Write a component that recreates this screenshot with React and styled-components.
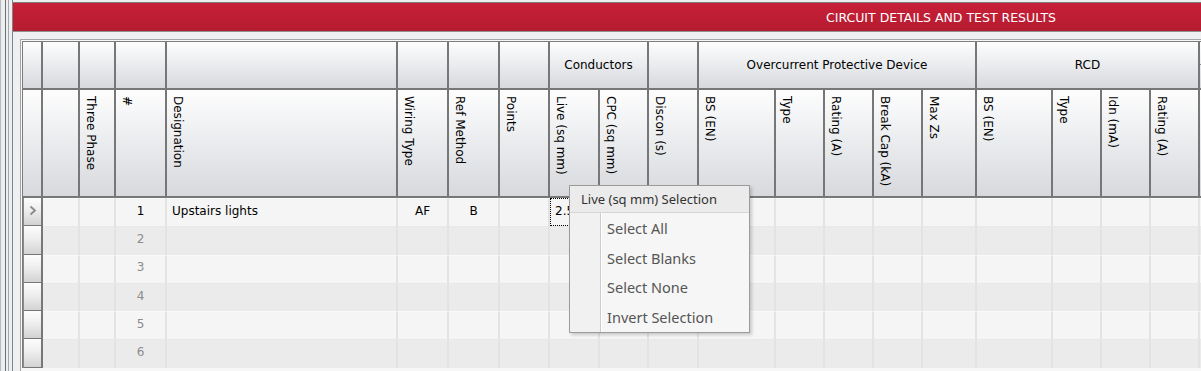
import styled, { createGlobalStyle } from 'styled-components'

const GlobalStyle = createGlobalStyle`
  html, body { margin: 0; padding: 0; }
  body {
    width: 1201px;
    height: 371px;
    overflow: hidden;
    background: #eceef0;
    font-family: "DejaVu Sans", Verdana, sans-serif;
  }
`

const Page = styled.div`
  display: flex;
  height: 371px;
`

const Gutter = styled.div`
  flex: 0 0 12px;
  background: linear-gradient(
    to right,
    #b8b9bb 0 1px,
    #eceef0 1px 5px,
    #6b6f74 5px 6px,
    #eceef0 6px 8px,
    #a3a7ab 8px 9px,
    #eceef0 9px
  );
`

const Panel = styled.div`
  flex: 1;
  min-width: 0;
  display: flex;
  flex-direction: column;
  padding-top: 2px;
  border-left: 1px solid #808387;
`

const TitleBar = styled.div`
  height: 28px;
  display: flex;
  align-items: center;
  padding-left: 813px;
  border-top: 1px solid #7d7d7d;
  border-bottom: 1px solid #8e9094;
  background: linear-gradient(#c71f37, #b51c30);
  color: #ffffff;
  font-size: 12.5px;
  white-space: nowrap;
`

const Content = styled.div`
  flex: 1;
  padding: 7px 0 0 7px;
  background: #eef0f2;
  overflow: hidden;
`

const GridFrame = styled.div`
  border-top: 1px solid #a4a6a8;
  border-left: 1px solid #a4a6a8;
  padding: 1px 0 0 1px;
  background: #f7f7f7;
  height: 100%;
`

const Grid = styled.div`
  position: relative;
  display: grid;
  grid-template-columns: ${(p) => p.$cols};
  grid-template-rows: 48px 108px repeat(6, 28.3px);
  border-top: 1px solid #7c7c7c;
  border-left: 1px solid #7c7c7c;
  font-size: 12px;
  color: #000;
`

const HeadCell = styled.div`
  box-sizing: border-box;
  display: flex;
  align-items: ${(p) => (p.$group ? 'center' : 'flex-start')};
  justify-content: ${(p) => (p.$group ? 'center' : 'flex-start')};
  padding: ${(p) => (p.$group ? '0' : '6px 0 0 3px')};
  grid-column: span ${(p) => p.$span || 1};
  border-right: 2px solid #777777;
  border-bottom: 2px solid #777777;
  background: linear-gradient(#fdfdfd, #f0f1f3 35%, #d7d9dd);
  white-space: nowrap;
  overflow: hidden;
  position: relative;
`

const SplitLine = styled.div`
  position: absolute;
  left: 0;
  right: 0;
  top: 22px;
  border-bottom: 1px solid #8a8a8a;
`

const VLabel = styled.span`
  writing-mode: vertical-rl;
  white-space: nowrap;
  line-height: 15px;
`

const RowHead = styled.div`
  box-sizing: border-box;
  display: flex;
  align-items: center;
  justify-content: center;
  padding-bottom: 3px;
  border-left: 1px solid #8a8a8a;
  border-right: 2px solid #777777;
  border-bottom: 1px solid #777777;
  background: linear-gradient(#fdfdfd, #eeeeee 45%, #d3d3d3);
`

const Cell = styled.div`
  box-sizing: border-box;
  display: flex;
  align-items: center;
  justify-content: ${(p) => (p.$center ? 'center' : 'flex-start')};
  padding: ${(p) => (p.$center ? '0 0 4px 0' : '0 0 4px 5px')};
  background: ${(p) => (p.$odd ? '#f5f5f5' : '#ebebeb')};
  border-right: 2px solid #e3e3e3;
  border-top: 1px solid ${(p) => (p.$odd ? '#fafafa' : '#e8e8e8')};
  color: ${(p) => (p.$muted ? '#8c8c8c' : '#000')};
  outline: ${(p) => (p.$focus ? '1px dotted #000' : 'none')};
  outline-offset: -1px;
  white-space: nowrap;
  overflow: hidden;
`

const Menu = styled.div`
  position: absolute;
  left: 546px;
  top: 143px;
  width: 181px;
  height: 148px;
  box-sizing: border-box;
  border: 1px solid #9c9c9c;
  background: #f6f6f6;
  box-shadow: 2px 2px 3px rgba(0, 0, 0, 0.18);
  font-family: "Noto Sans", "Open Sans", sans-serif;
  display: flex;
  flex-direction: column;
`

const MenuTitle = styled.div`
  height: 26px;
  flex: 0 0 26px;
  display: flex;
  align-items: center;
  padding-left: 11px;
  background: #ebebeb;
  border-bottom: 1px solid #d6d6d6;
  color: #333;
  font-size: 13px;
  white-space: nowrap;
`

const MenuList = styled.div`
  flex: 1;
  background: linear-gradient(
    to right,
    #f1f1f1 0 30px,
    #cdcdcd 30px 31px,
    #ffffff 31px 32px,
    #f6f6f6 32px
  );
`

const MenuItem = styled.div`
  height: 29.7px;
  display: flex;
  align-items: center;
  padding-left: 37px;
  color: #555;
  font-size: 14.5px;
  white-space: nowrap;
`

const columns = [
  { w: 20 },
  { w: 37 },
  { w: 36, label: 'Three Phase' },
  { w: 51, label: '#', key: 'num', center: true },
  { w: 231, label: 'Designation', key: 'designation' },
  { w: 51, label: 'Wiring Type', key: 'wiring', center: true },
  { w: 51, label: 'Ref Method', key: 'ref', center: true },
  { w: 50, label: 'Points' },
  { w: 50, label: 'Live (sq mm)', key: 'live' },
  { w: 49, label: 'CPC (sq mm)' },
  { w: 50, label: 'Discon (s)' },
  { w: 77, label: 'BS (EN)' },
  { w: 49, label: 'Type' },
  { w: 49, label: 'Rating (A)' },
  { w: 49, label: 'Break Cap (kA)' },
  { w: 54, label: 'Max Zs' },
  { w: 76, label: 'BS (EN)' },
  { w: 49, label: 'Type' },
  { w: 49, label: 'Idn (mA)' },
  { w: 49, label: 'Rating (A)' },
  { w: 60 },
]

const groups = [
  ...Array(8).fill({ span: 1 }),
  { span: 2, label: 'Conductors' },
  { span: 1 },
  { span: 5, label: 'Overcurrent Protective Device' },
  { span: 4, label: 'RCD' },
  { span: 1, split: true },
]

const rows = [
  { num: '1', designation: 'Upstairs lights', wiring: 'AF', ref: 'B', live: '2.5' },
  { num: '2' },
  { num: '3' },
  { num: '4' },
  { num: '5' },
  { num: '6' },
]

const menuItems = ['Select All', 'Select Blanks', 'Select None', 'Invert Selection']

function Chevron() {
  return (
    <svg width="8" height="11" viewBox="0 0 8 11">
      <polyline points="1.5,1.5 6,5.5 1.5,9.5" fill="none" stroke="#8a8a8a" strokeWidth="1.8" />
    </svg>
  )
}

export default function App() {
  const template = columns.map((c) => `${c.w}px`).join(' ')
  return (
    <>
      <GlobalStyle />
      <Page>
        <Gutter />
        <Panel>
          <TitleBar>CIRCUIT DETAILS AND TEST RESULTS</TitleBar>
          <Content>
            <GridFrame>
              <Grid $cols={template}>
                {groups.map((g, i) => (
                  <HeadCell key={`g${i}`} $group $span={g.span}>
                    {g.label}
                    {g.split && <SplitLine />}
                  </HeadCell>
                ))}
                {columns.map((c, i) => (
                  <HeadCell key={`h${i}`}>
                    {c.label && <VLabel>{c.label}</VLabel>}
                  </HeadCell>
                ))}
                {rows.map((r, ri) =>
                  columns.map((c, ci) => {
                    if (ci === 0) {
                      return <RowHead key={`r${ri}c${ci}`}>{ri === 0 && <Chevron />}</RowHead>
                    }
                    return (
                      <Cell
                        key={`r${ri}c${ci}`}
                        $odd={ri % 2 === 0}
                        $center={c.center}
                        $muted={c.key === 'num' && ri > 0}
                        $focus={ri === 0 && c.key === 'live'}
                      >
                        {c.key ? r[c.key] : ''}
                      </Cell>
                    )
                  })
                )}
                <Menu>
                  <MenuTitle>Live (sq mm) Selection</MenuTitle>
                  <MenuList>
                    {menuItems.map((m) => (
                      <MenuItem key={m}>{m}</MenuItem>
                    ))}
                  </MenuList>
                </Menu>
              </Grid>
            </GridFrame>
          </Content>
        </Panel>
      </Page>
    </>
  )
}
